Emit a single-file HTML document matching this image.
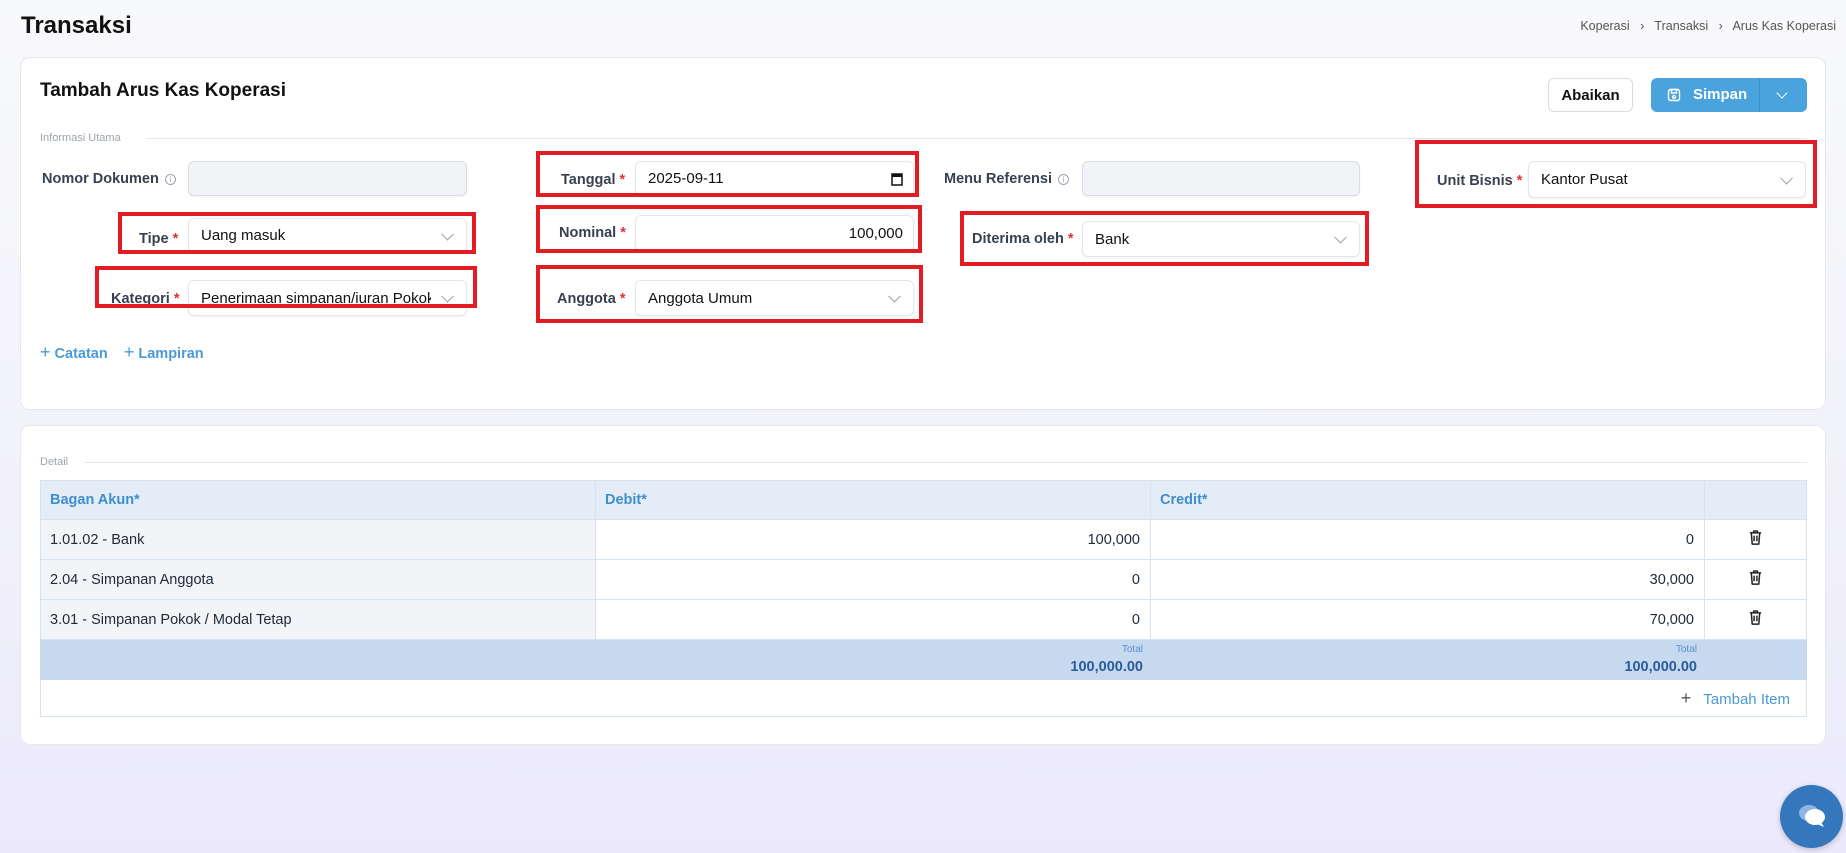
<!DOCTYPE html>
<html><head><meta charset="utf-8"><style>
*{box-sizing:border-box;margin:0;padding:0}
body{width:1846px;height:853px;overflow:hidden;font-family:"Liberation Sans",sans-serif;background:linear-gradient(#f8f9fb 0%,#f3f3fa 45%,#ebe9fb 100%);position:relative;color:#1f2937}
.a{position:absolute}
.card{position:absolute;background:#fff;border:1px solid #e6e8ee;border-radius:10px}
.lbl{position:absolute;font-size:14.5px;color:#374151;text-align:right;font-weight:bold}
.req{color:#e0303a}
.inp{position:absolute;border:1px solid #e3e6ec;border-radius:6px;background:#fff;font-size:15px;color:#111;padding-left:12px;display:flex;align-items:center;box-shadow:0 1px 2px rgba(0,0,0,.06)}
.dis{background:#f1f3f7;border-color:#d9dde5}
.chev{position:absolute;right:14px;top:50%;width:9px;height:9px;border-right:1.5px solid #9ca3af;border-bottom:1.5px solid #9ca3af;transform:translateY(-70%) rotate(45deg)}
.red{position:absolute;border:4px solid #e31b23}
.info{display:inline-block;width:11px;height:11px;border:1px solid #9ca3af;border-radius:50%;font-size:8px;line-height:9px;text-align:center;color:#9ca3af;margin-left:6px;vertical-align:1px;font-weight:normal}
table{border-collapse:collapse;position:absolute;left:40px;top:480px;width:1767px;font-size:14.5px}
td,th{border:1px solid #d5e2f2;height:40px}
th{background:#e4ecf8;color:#3f8fca;text-align:left;font-weight:bold;padding-left:9px;height:39px}
td.k{background:#f2f4f8;padding-left:9px}
td.n{text-align:right;padding-right:10px}
td.t{text-align:center}
.tot td{background:#c6d9ef;border-color:#c6d9ef;text-align:right;padding-right:7px;color:#2b5b9b;font-weight:bold;font-size:14.5px}
.tot small{display:block;font-size:10px;font-weight:normal;color:#5b8fd0;margin-bottom:4px}
</style></head><body>
<div class="a" style="left:21px;top:12px;font-size:24px;font-weight:bold;color:#111">Transaksi</div>
<div class="a" style="right:10px;top:19px;font-size:12.5px;color:#555">Koperasi &nbsp;&nbsp;›&nbsp;&nbsp; Transaksi &nbsp;&nbsp;›&nbsp;&nbsp; Arus Kas Koperasi</div>

<div class="card" style="left:20px;top:57px;width:1806px;height:353px"></div>
<div class="a" style="left:40px;top:80px;font-size:19px;font-weight:bold;color:#111">Tambah Arus Kas Koperasi</div>
<div class="a" style="left:1548px;top:78px;width:85px;height:34px;border:1px solid #d7dbe2;border-radius:6px;font-size:15px;font-weight:bold;display:flex;align-items:center;justify-content:center;color:#111">Abaikan</div>
<div class="a" style="left:1651px;top:78px;width:156px;height:34px;border-radius:6px;background:#4aa3dc;color:#fff;font-size:15px;font-weight:bold">
 <svg class="a" style="left:16px;top:10px" width="14" height="14" viewBox="0 0 14 14" fill="none" stroke="#fff" stroke-width="1.4"><rect x="1.5" y="1.5" width="11" height="11" rx="2"/><rect x="4.5" y="1.5" width="5" height="3.5"/><circle cx="7" cy="9" r="1.4"/></svg>
 <span class="a" style="left:42px;top:8px">Simpan</span>
 <div class="a" style="left:108px;top:0;width:1px;height:34px;background:#3d8fc6"></div>
 <div class="a" style="left:127px;top:11px;width:8px;height:8px;border-right:1.5px solid #fff;border-bottom:1.5px solid #fff;transform:rotate(45deg)"></div>
</div>
<div class="a" style="left:40px;top:132px;font-size:11px;color:#9ca3af">Informasi Utama</div>
<div class="a" style="left:146px;top:138px;width:1661px;height:1px;background:#e5e7eb"></div>

<div class="lbl" style="left:42px;top:171px">Nomor Dokumen<span class="info">i</span></div>
<div class="inp dis" style="left:188px;top:161px;width:279px;height:35px"></div>
<div class="lbl" style="left:561px;top:172px">Tanggal <span class="req">*</span></div>
<div class="inp" style="left:635px;top:161px;width:279px;height:35px">2025-09-11
 <svg class="a" style="right:10px;top:10px" width="12" height="14" viewBox="0 0 12 14"><rect x="1" y="2" width="10" height="11" fill="none" stroke="#111" stroke-width="1.5"/><rect x="1" y="2" width="10" height="3" fill="#111"/></svg></div>
<div class="lbl" style="left:944px;top:171px">Menu Referensi<span class="info">i</span></div>
<div class="inp dis" style="left:1082px;top:161px;width:278px;height:35px"></div>
<div class="lbl" style="left:1437px;top:173px">Unit Bisnis <span class="req">*</span></div>
<div class="inp" style="left:1528px;top:161px;width:278px;height:37px">Kantor Pusat<div class="chev"></div></div>

<div class="lbl" style="left:139px;top:231px">Tipe <span class="req">*</span></div>
<div class="inp" style="left:188px;top:218px;width:279px;height:35px">Uang masuk<div class="chev"></div></div>
<div class="lbl" style="left:559px;top:225px">Nominal <span class="req">*</span></div>
<div class="inp" style="left:635px;top:215px;width:279px;height:36px;justify-content:flex-end;padding-right:10px">100,000</div>
<div class="lbl" style="left:972px;top:231px">Diterima oleh <span class="req">*</span></div>
<div class="inp" style="left:1082px;top:221px;width:278px;height:36px">Bank<div class="chev"></div></div>

<div class="lbl" style="left:111px;top:291px">Kategori <span class="req">*</span></div>
<div class="inp" style="left:188px;top:280px;width:279px;height:36px;overflow:hidden;white-space:nowrap"><span style="width:230px;overflow:hidden;display:inline-block">Penerimaan simpanan/iuran Pokok</span><div class="chev"></div></div>
<div class="lbl" style="left:557px;top:291px">Anggota <span class="req">*</span></div>
<div class="inp" style="left:635px;top:280px;width:279px;height:36px">Anggota Umum<div class="chev"></div></div>

<div class="red" style="left:118px;top:212px;width:358px;height:42px"></div>
<div class="red" style="left:95px;top:266px;width:382px;height:42px"></div>
<div class="red" style="left:536px;top:151px;width:383px;height:46px"></div>
<div class="red" style="left:536px;top:205px;width:386px;height:48px"></div>
<div class="red" style="left:536px;top:265px;width:387px;height:58px"></div>
<div class="red" style="left:960px;top:211px;width:409px;height:55px"></div>
<div class="red" style="left:1415px;top:140px;width:402px;height:68px"></div>

<div class="a" style="left:40px;top:342px;font-size:14.5px;color:#4a9ad4;font-weight:bold"><span style="font-weight:normal;font-size:18px">+</span> Catatan &nbsp;&nbsp; <span style="font-weight:normal;font-size:18px">+</span> Lampiran</div>

<div class="card" style="left:20px;top:425px;width:1806px;height:320px"></div>
<div class="a" style="left:40px;top:456px;font-size:11px;color:#9ca3af">Detail</div>
<div class="a" style="left:84px;top:462px;width:1723px;height:1px;background:#e5e7eb"></div>
<svg width="0" height="0" style="position:absolute"><defs><symbol id="tr" viewBox="0 0 16 18"><path d="M2 4h12M6 4V2h4v2M3.5 4l1 12h7l1-12M6.5 7v6M9.5 7v6" fill="none" stroke="#222" stroke-width="1.6" stroke-linejoin="round"/></symbol></defs></svg>
<table>
<tr><th style="width:555px">Bagan Akun*</th><th style="width:555px">Debit*</th><th style="width:554px">Credit*</th><th></th></tr>
<tr><td class="k">1.01.02 - Bank</td><td class="n">100,000</td><td class="n">0</td><td class="t"><svg width="15" height="17"><use href="#tr"/></svg></td></tr>
<tr><td class="k">2.04 - Simpanan Anggota</td><td class="n">0</td><td class="n">30,000</td><td class="t"><svg width="15" height="17"><use href="#tr"/></svg></td></tr>
<tr><td class="k">3.01 - Simpanan Pokok / Modal Tetap</td><td class="n">0</td><td class="n">70,000</td><td class="t"><svg width="15" height="17"><use href="#tr"/></svg></td></tr>
<tr class="tot"><td></td><td><small>Total</small>100,000.00</td><td><small>Total</small>100,000.00</td><td></td></tr>
<tr><td colspan="4" style="text-align:right;padding-right:16px;color:#4a9ad4;height:37px;font-size:15px"><span style="color:#555;font-size:18px;margin-right:12px">+</span>Tambah Item</td></tr>
</table>

<div class="a" style="left:1780px;top:785px;width:63px;height:63px;border-radius:50%;background:#3577bd;box-shadow:0 2px 6px rgba(0,0,0,.2)">
 <svg class="a" style="left:17px;top:18px" width="30" height="26" viewBox="0 0 30 26"><ellipse cx="12" cy="10" rx="10" ry="8" fill="#8fb6e2"/><ellipse cx="18" cy="14" rx="10" ry="8" fill="#fff"/><path d="M24 19 L27 24 L20 21Z" fill="#fff"/></svg>
</div>
</body></html>
